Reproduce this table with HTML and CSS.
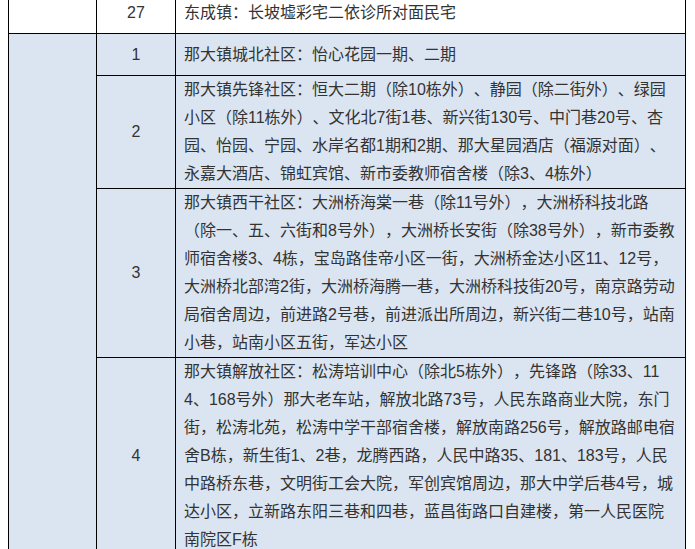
FILE: index.html
```html
<!DOCTYPE html>
<html lang="zh-CN">
<head>
<meta charset="utf-8">
<title>table</title>
<link rel="stylesheet" href="styles.css">
</head>
<body>
<div class="wrap">
<table class="grid">
<colgroup><col class="c1"><col class="c2"><col class="c3"></colgroup>
<tbody>
<tr class="plain single">
<td></td>
<td class="num">27</td>
<td class="txt">东成镇：长坡墟彩宅二依诊所对面民宅</td>
</tr>
<tr class="blue single">
<td rowspan="4"></td>
<td class="num">1</td>
<td class="txt">那大镇城北社区：怡心花园一期、二期</td>
</tr>
<tr class="blue">
<td class="num">2</td>
<td class="txt">那大镇先锋社区：恒大二期（除10栋外）、静园（除二街外）、绿园<br>小区（除11栋外）、文化北7街1巷、新兴街130号、中门巷20号、杏<br>园、怡园、宁园、水岸名都1期和2期、那大星园酒店（福源对面）、<br>永嘉大酒店、锦虹宾馆、新市委教师宿舍楼（除3、4栋外）</td>
</tr>
<tr class="blue">
<td class="num">3</td>
<td class="txt">那大镇西干社区：大洲桥海棠一巷（除11号外），大洲桥科技北路<br>（除一、五、六街和8号外），大洲桥长安街（除38号外），新市委教<br>师宿舍楼3、4栋，宝岛路佳帝小区一街，大洲桥金达小区11、12号，<br>大洲桥北部湾2街，大洲桥海腾一巷，大洲桥科技街20号，南京路劳动<br>局宿舍周边，前进路2号巷，前进派出所周边，新兴街二巷10号，站南<br>小巷，站南小区五街，军达小区</td>
</tr>
<tr class="blue">
<td class="num">4</td>
<td class="txt">那大镇解放社区：松涛培训中心（除北5栋外），先锋路（除33、11<br>4、168号外）那大老车站，解放北路73号，人民东路商业大院，东门<br>街，松涛北苑，松涛中学干部宿舍楼，解放南路256号，解放路邮电宿<br>舍B栋，新生街1、2巷，龙腾西路，人民中路35、181、183号，人民<br>中路桥东巷，文明街工会大院，军创宾馆周边，那大中学后巷4号，城<br>达小区，立新路东阳三巷和四巷，蓝昌街路口自建楼，第一人民医院<br>南院区F栋</td>
</tr>
</tbody>
</table>
</div>
</body>
</html>
```

FILE: styles.css
```css
html, body {
  margin: 0;
  padding: 0;
  background: #ffffff;
}
.wrap {
  padding-left: 8px;
  overflow: hidden;
  height: 549px;
}
.grid {
  margin-top: -9px;
  border-collapse: collapse;
  table-layout: fixed;
  width: 677px;
  font-family: "Liberation Sans", "Noto Sans CJK SC", sans-serif;
  font-size: 16px;
  line-height: 28px;
  color: #333333;
  text-spacing-trim: space-all;
}
.c1 { width: 88px; }
.c2 { width: 79px; }
.c3 { width: 510px; }
.grid td {
  border: 1px solid #000000;
  padding: 0 8px;
  vertical-align: middle;
}
.plain td { background: #ffffff; }
.blue td { background: #dbe5f1; }
.blue + .blue td, .grid td[rowspan] { background: #dbe5f1; }
.single td { height: 41px; }
.num { text-align: center; }
.txt { white-space: nowrap; text-align: left; }
```
